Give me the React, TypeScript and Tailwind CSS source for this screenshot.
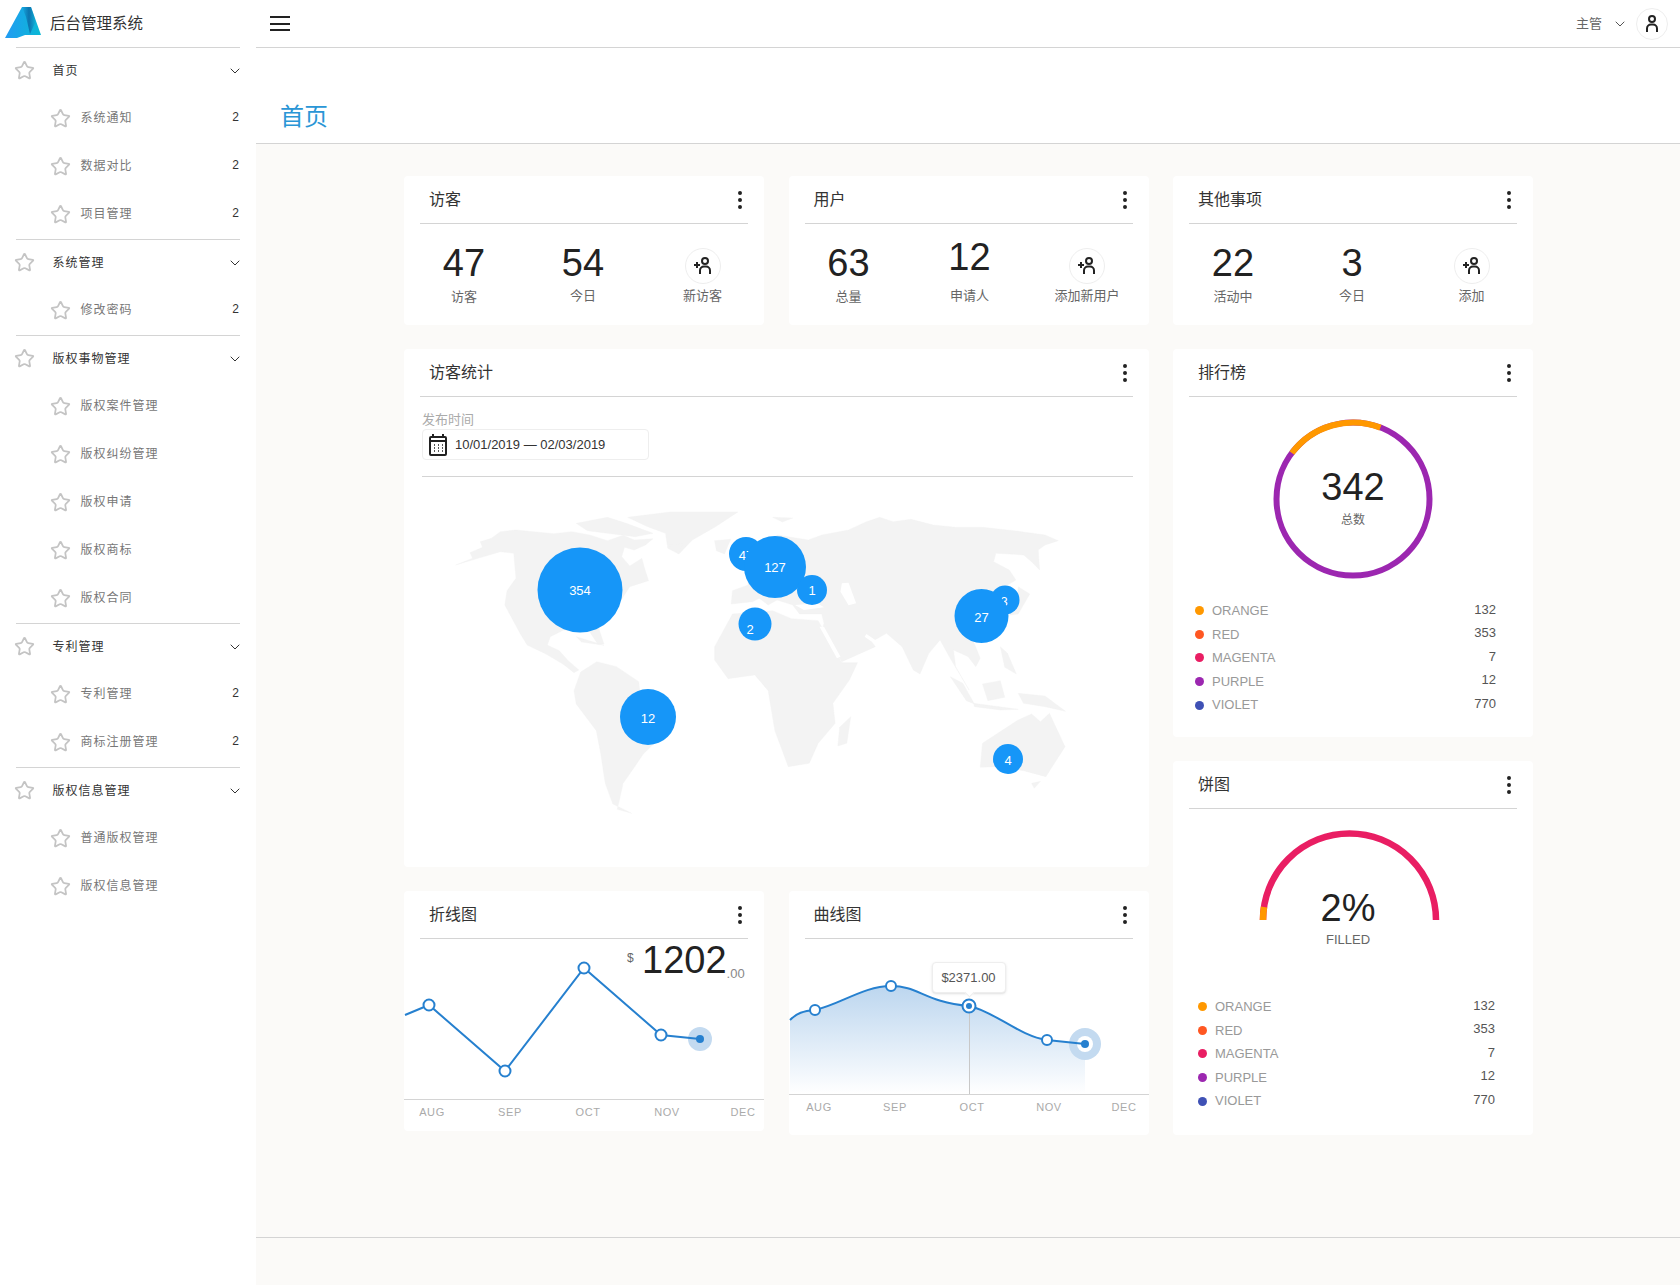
import { ChevronDown, EllipsisVertical, Star } from "lucide-react";
import type { ReactNode } from "react";

const menu = [
  { title: "首页", items: ["系统通知", "数据对比", "项目管理"], badge: true },
  { title: "系统管理", items: ["修改密码"], badge: true },
  { title: "版权事物管理", items: ["版权案件管理", "版权纠纷管理", "版权申请", "版权商标", "版权合同"], badge: false },
  { title: "专利管理", items: ["专利管理", "商标注册管理"], badge: true },
  { title: "版权信息管理", items: ["普通版权管理", "版权信息管理"], badge: false },
];

const legend = [
  { name: "ORANGE", value: 132, dot: "bg-[#ff9800]" },
  { name: "RED", value: 353, dot: "bg-[#ff5722]" },
  { name: "MAGENTA", value: 7, dot: "bg-[#e91e63]" },
  { name: "PURPLE", value: 12, dot: "bg-[#9c27b0]" },
  { name: "VIOLET", value: 770, dot: "bg-[#3f51b5]" },
];

// 陆地轮廓，坐标系 1568x1050，整体缩放到 700x350
const land = [
  "80,225 118,205 112,188 140,172 135,155 160,145 180,125 215,120 260,126 300,131 340,125 380,135 420,152 455,136 480,150 522,146 505,165 480,180 458,172 452,200 470,228 497,205 503,235 512,272 470,290 448,335 430,372 398,405 412,462 398,462 380,425 360,425 322,420 292,440 285,465 312,482 332,512 356,540 345,548 320,522 282,492 240,465 225,432 206,385 190,345 195,302 215,265 210,190 180,185 130,205",
  "350,100 420,82 462,100 522,130 482,140 420,130 375,122",
  "465,82 560,66 712,66 662,110 610,150 580,192 555,175 550,130 510,110",
  "345,602 360,546 396,515 440,530 490,575 492,600 572,672 540,740 500,792 480,832 455,880 442,958 474,970 432,942 415,880 405,792 395,722 350,642",
  "697,342 700,302 735,285 735,255 770,225 790,232 840,215 860,190 800,200 775,225 762,180 800,135 870,150 900,135 960,120 1000,95 1030,82 1060,95 1100,88 1150,105 1200,112 1260,112 1330,122 1400,135 1430,152 1400,165 1385,180 1388,240 1370,215 1352,195 1320,192 1290,190 1285,215 1320,240 1335,270 1310,290 1322,325 1300,320 1290,335 1305,385 1270,430 1240,455 1255,505 1245,530 1228,500 1195,480 1200,530 1230,600 1190,510 1165,450 1140,490 1120,552 1105,540 1080,470 1045,430 1012,455 1020,470 945,515 900,425 905,400 900,372 850,372 835,345 800,330 780,345 760,325 745,335",
  "660,470 700,372 790,362 832,386 892,392 945,518 980,518 962,570 925,640 930,700 892,760 872,820 825,830 795,722 780,602 750,555 690,566 660,510",
  "965,680 956,760 936,768 940,712",
  "660,152 696,148 682,192 664,182",
  "1340,290 1366,312 1340,372 1320,376 1338,340",
  "1188,560 1216,580 1242,642 1224,632",
  "1260,582 1300,572 1310,622 1272,632",
  "1300,470 1316,490 1336,552 1310,532",
  "1240,640 1340,658 1300,660 1242,650",
  "1340,610 1400,618 1446,664 1400,650 1352,640",
  "1260,760 1340,690 1370,672 1390,695 1410,670 1445,770 1402,860 1352,842 1292,830 1255,832",
  "1370,880 1390,874 1376,895",
  "350,440 412,466 362,456",
  "790,82 835,84 812,96",
  "555,165 590,160 578,190",
];

const water = [
  "945,280 960,278 977,340 960,346 942,305",
  "840,345 890,340 905,352 860,360",
  "895,410 905,410 942,500 934,505",
  "1000,432 1040,468 1030,472 996,440",
];

function Card({ title, className, children }: { title: string; className: string; children: ReactNode }) {
  return (
    <section className={`rounded-sm bg-white ${className}`}>
      <div className="mx-4 flex h-12 items-center justify-between border-b border-[#d4d4d4] pl-[9px]">
        <h2 className="text-base font-normal text-[#333]">{title}</h2>
        <EllipsisVertical size={24} strokeWidth={2} className="mr-[-4px] text-[#222]" />
      </div>
      {children}
    </section>
  );
}

function PersonIcon({ plus }: { plus?: boolean }) {
  return (
    <svg width="24" height="24" viewBox={plus ? "0 0 24 24" : "2 0 24 24"} fill="none" stroke="#222" strokeWidth="2">
      <circle cx="14" cy="7" r="3" />
      <path d="M9 20v-3.5a4 4 0 0 1 4-4h2a4 4 0 0 1 4 4V20" />
      {plus && <path d="M3 11h6M6 8v6" />}
    </svg>
  );
}

function Stat({ value, label, pt, gap }: { value: string; label: string; pt: string; gap: string }) {
  return (
    <div className={`flex flex-col items-center ${pt}`}>
      <div className="h-10 text-[38px] leading-10 text-[#222]">{value}</div>
      <div className={`h-[18px] text-[13px] leading-[18px] text-[#666] ${gap}`}>{label}</div>
    </div>
  );
}

function AddStat({ label }: { label: string }) {
  return (
    <div className="flex flex-col items-center pr-[3px] pt-6">
      <div className="flex h-9 w-9 items-center justify-center rounded-full border border-[#eee]">
        <PersonIcon plus />
      </div>
      <div className="mt-[3px] h-[18px] text-[13px] leading-[18px] text-[#666]">{label}</div>
    </div>
  );
}

function StatCard({ title, children }: { title: string; children: ReactNode }) {
  return (
    <Card title={title} className="h-[149px] flex-1">
      <div className="grid grid-cols-3">{children}</div>
    </Card>
  );
}

function Legend({ className }: { className: string }) {
  return (
    <ul className={className}>
      {legend.map((row) => (
        <li key={row.name} className="flex h-[23.6px] items-center">
          <span className={`h-[9px] w-[9px] rounded-full ${row.dot}`} />
          <span className="ml-2 text-[13px] text-[#999]">{row.name}</span>
          <span className="mb-[3px] ml-auto text-[13px] text-[#555]">{row.value}</span>
        </li>
      ))}
    </ul>
  );
}

function WorldMap() {
  return (
    <svg width="700" height="350" viewBox="0 0 700 350" className="ml-4 mt-[13px] block">
      <g transform="scale(0.4464 0.3333)">
        {land.map((pts) => (
          <polygon key={pts} points={pts} fill="#f3f3f3" stroke="#f3f3f3" strokeLinejoin="round" />
        ))}
        {water.map((pts) => (
          <polygon key={pts} points={pts} fill="#fff" />
        ))}
      </g>
      <g fill="#1696f8">
        <circle cx="160" cy="100" r="42.5" />
        <circle cx="326" cy="64" r="17" />
      </g>
      <text x="326" y="70" fill="#fff" fontSize="13" textAnchor="middle">47</text>
      <circle cx="355" cy="77" r="31" fill="#1696f8" />
      <circle cx="392" cy="100" r="15" fill="#1696f8" />
      <circle cx="335" cy="134" r="16.5" fill="#1696f8" />
      <circle cx="585" cy="110" r="14.5" fill="#1696f8" />
      <text x="584" y="116" fill="#fff" fontSize="13" textAnchor="middle">3</text>
      <circle cx="561.5" cy="126" r="27" fill="#1696f8" />
      <circle cx="228" cy="227" r="28" fill="#1696f8" />
      <circle cx="588" cy="269" r="15" fill="#1696f8" />
      <g fill="#fff" fontSize="13" textAnchor="middle">
        <text x="160" y="105">354</text>
        <text x="355" y="82">127</text>
        <text x="392" y="105">1</text>
        <text x="330" y="144">2</text>
        <text x="561.5" y="132">27</text>
        <text x="228" y="233">12</text>
        <text x="588" y="275">4</text>
      </g>
    </svg>
  );
}

function AxisLabels({ y, xs }: { y: number; xs: number[] }) {
  const names = ["AUG", "SEP", "OCT", "NOV", "DEC"];
  return (
    <g fill="#aaa" fontSize="11" letterSpacing="0.6" textAnchor="middle">
      {names.map((name, i) => (
        <text key={name} x={xs[i]} y={y}>{name}</text>
      ))}
    </g>
  );
}

function LineChart() {
  const pts = [[25, 66], [101, 132], [180, 29], [257, 96]];
  return (
    <div className="relative">
      <svg width="360" height="192" viewBox="0 0 360 192" className="block">
        <circle cx="296" cy="100" r="12" fill="#c3daf0" />
        <polyline points="1,76 25,66 101,132 180,29 257,96 296,100" fill="none" stroke="#2680cf" strokeWidth="2" />
        {pts.map(([x, y]) => (
          <circle key={x} cx={x} cy={y} r="5.5" fill="#fff" stroke="#2680cf" strokeWidth="2" />
        ))}
        <circle cx="296" cy="100" r="4" fill="#2680cf" />
        <line x1="0" x2="360" y1="160.5" y2="160.5" stroke="#d4d4d4" />
        <AxisLabels y={177} xs={[28, 106, 184, 263, 339]} />
      </svg>
      <div className="absolute left-[223px] top-[1px] flex items-start">
        <span className="mt-[10px] w-[15px] text-xs text-[#666]">$</span>
        <span className="text-[38px] leading-10 text-[#222]">1202</span>
        <span className="mt-[26px] text-[13px] leading-4 text-[#888]">.00</span>
      </div>
    </div>
  );
}

function CurveChart() {
  const curve = "M1 81C8 74 14 72 26 71C50 66 75 47 102 47C130 47 135 63 180 67C205 72 230 97 258 101L296 105";
  return (
    <div className="relative">
      <svg width="360" height="196" viewBox="0 0 360 196" className="block">
        <defs>
          <linearGradient id="area" x1="0" y1="0" x2="0" y2="1">
            <stop offset="0" stopColor="#bcd6ef" />
            <stop offset="1" stopColor="#ffffff" />
          </linearGradient>
        </defs>
        <path d={`${curve}V155H1Z`} fill="url(#area)" />
        <line x1="180.5" x2="180.5" y1="67" y2="155" stroke="#c8c8c8" />
        <circle cx="296" cy="105" r="16" fill="#c3daf0" />
        <circle cx="296" cy="105" r="8" fill="#fff" />
        <path d={curve} fill="none" stroke="#2680cf" strokeWidth="2" />
        {[[26, 71], [102, 47], [258, 101]].map(([x, y]) => (
          <circle key={x} cx={x} cy={y} r="5" fill="#fff" stroke="#2680cf" strokeWidth="2" />
        ))}
        <circle cx="180" cy="67" r="6.5" fill="#fff" stroke="#2680cf" strokeWidth="2" />
        <circle cx="180" cy="67" r="3" fill="#2680cf" />
        <circle cx="296" cy="105" r="4" fill="#2680cf" />
        <line x1="0" x2="360" y1="155.5" y2="155.5" stroke="#d4d4d4" />
        <AxisLabels y={172} xs={[30, 106, 183, 260, 335]} />
      </svg>
      <div className="absolute left-[143px] top-[23px] flex h-[31px] w-[74px] items-center justify-center rounded-sm border border-[#eee] bg-white text-[13px] text-[#555] shadow-sm">
        $2371.00
        <span className="absolute bottom-[-4px] left-[33px] h-[7px] w-[7px] rotate-45 border-b border-r border-[#eee] bg-white" />
      </div>
    </div>
  );
}

function RankRing() {
  return (
    <div className="relative ml-[100px] mt-[22px] h-40 w-40">
      <svg width="160" height="160" viewBox="0 0 160 160" fill="none" strokeWidth="6">
        <circle cx="80" cy="80" r="76.5" stroke="#9c27b0" />
        <path d="M18.9 34A76.5 76.5 0 0 1 107.4 8.6" stroke="#ff9800" />
      </svg>
      <div className="absolute left-0 right-0 top-12 text-center text-[38px] leading-10 text-[#222]">342</div>
      <div className="absolute left-0 right-0 top-[92px] text-center text-xs leading-[18px] text-[#666]">总数</div>
    </div>
  );
}

function PieGauge() {
  return (
    <div className="relative mt-4 h-[135px]">
      <svg width="360" height="95" viewBox="0 0 360 95" fill="none" strokeWidth="6.5" className="ml-[-1px] block">
        <path d="M91 95A86.5 86.5 0 0 1 264 95" stroke="#e91e63" />
        <path d="M91 95A86.5 86.5 0 0 1 92 82" stroke="#ff9800" />
      </svg>
      <div className="absolute left-0 top-[63px] w-[350px] text-center text-[38px] leading-10 text-[#222]">2%</div>
      <div className="absolute left-0 top-[106px] w-[350px] text-center text-[13px] leading-[18px] text-[#666]">FILLED</div>
    </div>
  );
}

function Logo() {
  return (
    <svg width="40" height="34" viewBox="0 0 40 34" className="ml-[5px]">
      <defs>
        <linearGradient id="logo" x1="0" y1="0" x2="1" y2="0">
          <stop offset="0" stopColor="#229bf3" />
          <stop offset="1" stopColor="#0ab9d4" />
        </linearGradient>
        <linearGradient id="fold" x1="0" y1="0" x2="1" y2="0">
          <stop offset="0" stopColor="#0b5f9e" stopOpacity="0" />
          <stop offset="0.5" stopColor="#0b5f9e" stopOpacity="0.75" />
          <stop offset="1" stopColor="#0b5f9e" stopOpacity="0" />
        </linearGradient>
      </defs>
      <polygon points="0,31 17,0 26,0 36,28 20,28 12,31" fill="url(#logo)" />
      <polygon points="17,0 26,0 31,14 25,27 21,10" fill="url(#fold)" />
    </svg>
  );
}

function Sidebar() {
  return (
    <aside className="w-64 shrink-0 bg-white">
      <div className="flex h-12 items-center">
        <Logo />
        <span className="ml-[5px] text-[15.5px] text-[#333]">后台管理系统</span>
      </div>
      <nav>
        {menu.map((group) => (
          <div key={group.title} className="mx-4 border-t border-[#d4d4d4] first:mt-[-1px]">
            <div className="flex h-[47px] items-center pb-[2px]">
              <Star size={21} strokeWidth={2} className="ml-[-2.5px] text-[#c4c4c4]" />
              <span className="ml-[18px] text-xs tracking-[1px] text-[#333]">{group.title}</span>
              <ChevronDown size={16} strokeWidth={1.5} className="ml-auto mr-[-3px] text-[#333]" />
            </div>
            {group.items.map((item) => (
              <div key={item} className="flex h-12 items-center pb-[2px] pl-8">
                <Star size={21} strokeWidth={2} className="ml-[1.5px] text-[#c4c4c4]" />
                <span className="ml-[10px] text-xs tracking-[1px] text-[#777]">{item}</span>
                {group.badge && <span className="mb-[3px] ml-auto mr-[1px] text-xs text-[#333]">2</span>}
              </div>
            ))}
          </div>
        ))}
      </nav>
    </aside>
  );
}

export default function App() {
  return (
    <div
      className="flex min-h-[1285px] bg-white"
      style={{ fontFamily: '"Liberation Sans", "Noto Sans CJK SC", sans-serif' }}
    >
      <Sidebar />
      <main className="flex min-w-0 flex-1 flex-col">
        <header className="flex h-12 items-center justify-between border-b border-[#d4d4d4] pl-[14px] pr-3">
          <div className="flex w-5 flex-col gap-[4.5px]">
            <span className="h-[2px] bg-[#222]" />
            <span className="h-[2px] bg-[#222]" />
            <span className="h-[2px] bg-[#222]" />
          </div>
          <div className="flex items-center">
            <span className="text-[13px] text-[#666]">主管</span>
            <ChevronDown size={16} strokeWidth={1.5} className="ml-[10px] text-[#555]" />
            <div className="ml-2 flex h-8 w-8 items-center justify-center rounded-full border border-[#eee]">
              <PersonIcon />
            </div>
          </div>
        </header>
        <div className="flex h-24 items-center border-b border-[#d4d4d4] pl-6 pt-[43px]">
          <h1 className="text-[24px] font-normal leading-8 text-[#2a96d6]" style={{ fontFamily: '"Liberation Serif", "Noto Sans CJK SC", serif' }}>
            首页
          </h1>
        </div>
        <div className="flex-1 bg-[#fbfaf8] pt-8">
          <div className="ml-[148px] flex w-[1129px] flex-col gap-6">
            <div className="flex gap-[24.5px]">
              <StatCard title="访客">
                <Stat value="47" label="访客" pt="pt-[19px]" gap="mt-[5px]" />
                <Stat value="54" label="今日" pt="pr-[2px] pt-[19px]" gap="mt-[4px]" />
                <AddStat label="新访客" />
              </StatCard>
              <StatCard title="用户">
                <Stat value="63" label="总量" pt="pt-[19px]" gap="mt-[5px]" />
                <Stat value="12" label="申请人" pt="pl-[2px] pt-[13px]" gap="mt-[10px]" />
                <AddStat label="添加新用户" />
              </StatCard>
              <StatCard title="其他事项">
                <Stat value="22" label="活动中" pt="pt-[19px]" gap="mt-[5px]" />
                <Stat value="3" label="今日" pt="pr-[2px] pt-[19px]" gap="mt-[4px]" />
                <AddStat label="添加" />
              </StatCard>
            </div>
            <div className="flex items-start gap-[24.5px]">
              <div className="flex flex-1 flex-col gap-6">
                <Card title="访客统计" className="h-[518px]">
                  <div className="ml-[18px] mr-4 mt-[14px] border-b border-[#d4d4d4] pb-4">
                    <div className="h-[18px] text-[13px] leading-[18px] text-[#aaa]">发布时间</div>
                    <div className="flex h-[31px] w-[227px] items-center rounded-sm border border-[#eee] pl-[6px]">
                      <svg width="18" height="22" viewBox="0 0 18 22" fill="none" stroke="#222" strokeWidth="2">
                        <rect x="1" y="3" width="16" height="18" rx="1" />
                        <path d="M4 0v4M14 0v4" />
                        <path d="M1 7h16" />
                        <path d="M5 11h1M9 11h1M13 11h1M5 14h1M9 14h1M13 14h1M5 17h1M9 17h1M13 17h1" strokeWidth="1.5" />
                      </svg>
                      <span className="ml-2 text-[13px] text-[#333]">10/01/2019 — 02/03/2019</span>
                    </div>
                  </div>
                  <WorldMap />
                </Card>
                <div className="flex items-start gap-[24.5px]">
                  <Card title="折线图" className="h-60 flex-1">
                    <LineChart />
                  </Card>
                  <Card title="曲线图" className="h-[244px] flex-1">
                    <CurveChart />
                  </Card>
                </div>
              </div>
              <div className="flex w-[360px] flex-col gap-6">
                <Card title="排行榜" className="h-[388px]">
                  <RankRing />
                  <Legend className="ml-[22px] mr-[37px] mt-5" />
                </Card>
                <Card title="饼图" className="h-[374px]">
                  <PieGauge />
                  <Legend className="ml-[25px] mr-[38px] mt-[35px]" />
                </Card>
              </div>
            </div>
          </div>
        </div>
        <footer className="h-12 border-t border-[#d4d4d4] bg-[#fbfaf8]" />
      </main>
    </div>
  );
}
